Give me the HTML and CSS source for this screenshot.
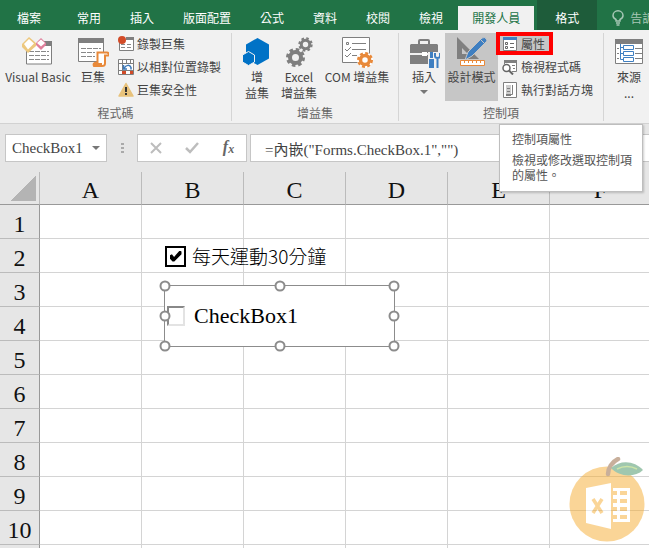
FILE: index.html
```
<!DOCTYPE html>
<html lang="zh-Hant">
<head>
    <meta charset="UTF-8">
    <meta name="viewport" content="width=device-width, initial-scale=1.0">
    <title>Excel</title>
    <link rel="stylesheet" href="styles.css">
</head>
<body>

    <nav class="tabs">
        <button class="file">檔案</button>
        <button>常用</button>
        <button>插入</button>
        <button>版面配置</button>
        <button>公式</button>
        <button>資料</button>
        <button>校閱</button>
        <button>檢視</button>
        <button class="active">開發人員</button>
        <button class="context">格式</button>
        <button class="tell">
            <svg width="12" height="16" viewBox="0 0 12 16" fill="none" stroke="#a6c7b5" stroke-width="1.5"><path d="M4 11V9.500C2 8.500 1 7 1 5.500a5 4.700 0 0 1 10 0C11 7 10 8.500 8 9.500V11zM4 13h4M4.500 15h3"/></svg>
            告訴我
        </button>
    </nav>

    <div class="ribbon">
        <section class="group">
            <div class="tools">
                <button class="big vb">
                    <svg width="32" height="32" viewBox="0 0 32 32">
                        <path d="M4.500 5v22h25V5" fill="#fff" stroke="#7f7f7f"/>
                        <path d="M22 4h8v5h-8z" fill="#7f7f7f"/>
                        <path d="M7 14.500h20M7 18.500h20M7 22.500h20" stroke="#888" stroke-dasharray="5 1"/>
                        <path d="M0 7l7-7 7 6v3l-8 7-6-6z" fill="#edc87e"/>
                        <path d="M2 7l5-5 5 4.500-6 6z" fill="#fff"/>
                        <path d="M14 6l5-5 5 5v2l-5 5-5-5z" fill="#e07f9b"/>
                        <path d="M15 6l4-3.500L23 6l-4 3.500z" fill="#fff"/>
                    </svg>
                    <span>Visual Basic</span>
                </button>
                <button class="big">
                    <svg width="32" height="32" viewBox="0 0 32 32">
                        <path d="M1.500 2v22.500h25V2z" fill="#fff" stroke="#7f7f7f"/>
                        <path d="M1 1h26v5H1z" fill="#7f7f7f"/>
                        <path d="M4 11.500h20M4 15.500h14M4 19.500h14" stroke="#888" stroke-dasharray="5 1"/>
                        <path d="M20.500 15.500h9.500c2 0 2 3 1 3h-3v8c0 2-1 2.500-3 2.500h-8c-1-2 0-3.500 3.500-3.500z" fill="#fff" stroke="#e8893a" stroke-width="2"/>
                        <path d="M17 26h8v3h-8z" fill="#e8893a"/>
                    </svg>
                    <span>巨集</span>
                </button>
                <div class="small-tools">
                    <button class="small">
                        <svg width="16" height="16" viewBox="0 0 16 16">
                            <path d="M1.500 3v11.500h14V2" fill="#fff" stroke="#7f7f7f"/>
                            <path d="M8 1h8v3H8z" fill="#7f7f7f"/>
                            <path d="M3 8.500h4m2 0h4M3 11.500h4m2 0h4" stroke="#888"/>
                            <circle cx="4" cy="4" r="4" fill="#d24b28"/>
                        </svg>
                        錄製巨集
                    </button>
                    <button class="small">
                        <svg width="16" height="16" viewBox="0 0 16 16">
                            <path d="M.5.5h15v15H.5zM.5 4.500h15M.5 11.500h15M4.500.5v15M8.500.5v4M12.500.5v15" fill="#fff" stroke="#7f7f7f"/>
                            <path d="M4 12h4v3H4zM12 12h3v3h-3z" fill="#d24b28"/>
                            <path d="M5 5h8v6H5z" fill="#fff"/>
                            <path d="M5.500 6v4H9M6 9.500c2-4 6-4 7-1v2" fill="none" stroke="#3c78b8" stroke-width="1.500"/>
                        </svg>
                        以相對位置錄製
                    </button>
                    <button class="small">
                        <svg width="16" height="16" viewBox="0 0 16 16">
                            <path d="M8 1.500L15 14H1z" fill="#e8c27b" stroke="#e8c27b" stroke-width="1.500" stroke-linejoin="round"/>
                            <path d="M7 5h2v5H7zM7 11h2v2H7z" fill="#333"/>
                        </svg>
                        巨集安全性
                    </button>
                </div>
            </div>
            <h2>程式碼</h2>
        </section>

        <section class="group">
            <div class="tools">
                <button class="big">
                    <svg width="32" height="32" viewBox="0 0 32 32" fill="#0072c6">
                        <path d="M16.500 1L28 7.500v14L16.500 28 5 21.500v-14z"/>
                        <path d="M7.500 14.500l6 3.500v7l-6 3.500L1.500 25v-7z" stroke="#f1f1f1"/>
                    </svg>
                    <span>增<br>益集</span>
                </button>
                <button class="big">
                    <svg width="32" height="32" viewBox="0 0 32 32" fill="none" stroke="#7f7f7f">
                        <circle cx="12.500" cy="20.500" r="5.500" stroke-width="4"/>
                        <circle cx="12.500" cy="20.500" r="8" stroke-width="3" stroke-dasharray="3.500 2.783"/>
                        <circle cx="22.500" cy="7.500" r="4.200" stroke-width="3"/>
                        <circle cx="22.500" cy="7.500" r="6" stroke-width="2.400" stroke-dasharray="2.500 2.212"/>
                    </svg>
                    <span>Excel<br>增益集</span>
                </button>
                <button class="big wide">
                    <svg width="32" height="32" viewBox="0 0 32 32" fill="none" stroke="#7f7f7f">
                        <path d="M1.500.5h27v25h-27z" fill="#fff"/>
                        <path d="M5.500 5.500h2v2h-2zM11 6.500h14M11 12.500h14M11 18.500h5M4 12l2 2 4-4M4 18l2 2 4-4"/>
                        <circle cx="24" cy="23" r="6.500" fill="#fff" stroke="#fff" stroke-width="3"/>
                        <circle cx="24" cy="23" r="4.500" stroke="#e8893a" stroke-width="3.500"/>
                        <circle cx="24" cy="23" r="6.800" stroke="#e8893a" stroke-width="2.400" stroke-dasharray="3 2.341"/>
                    </svg>
                    <span>COM 增益集</span>
                </button>
            </div>
            <h2>增益集</h2>
        </section>

        <section class="group">
            <div class="tools">
                <button class="big">
                    <svg width="32" height="32" viewBox="0 0 32 32">
                        <path d="M11 7V4q0-1 1-1h8q1 0 1 1v3" fill="none" stroke="#7f7f7f" stroke-width="2"/>
                        <path d="M3 7h26l1 1v8H2V8zM2 18h28v9H2z" fill="#7f7f7f"/>
                        <path d="M14 15h5v4h-5z" fill="#fff"/>
                        <path d="M20 15h12v13H20z" fill="#f1f1f1"/>
                        <path d="M22 15h3v6h-3zM21 22h5v9h-5z" fill="#3f7fc1"/>
                        <path d="M27 16v3q0 2 2.500 2t2.500-2v-3M29.500 21v10" fill="none" stroke="#3f7fc1" stroke-width="2"/>
                    </svg>
                    <span>插入</span>
                    <i class="arrow"></i>
                </button>
                <button class="big design">
                    <svg width="32" height="32" viewBox="0 0 32 32">
                        <path d="M1 0l22 22H1zM6 11v6h6z" fill="#7f7f7f" fill-rule="evenodd"/>
                        <path d="M9 23l3-8L26 1q3-2 5 2 0 1-1 2L16 19z" fill="#3f7fc1" stroke="#c6c6c6"/>
                        <path d="M25 3l4 4" stroke="#c6c6c6"/>
                        <path d="M4.500 23.500h24v5h-24z" fill="#fff" stroke="#e8893a"/>
                        <path d="M8.500 24v2m4-2v2m4-2v2m4-2v2m4-2v2" stroke="#e8893a"/>
                    </svg>
                    <span>設計模式</span>
                </button>
                <div class="small-tools">
                    <div class="marked">
                        <button class="small on" aria-describedby="tip">
                            <svg width="16" height="16" viewBox="0 0 16 16">
                                <path d="M1.500 1v13.500h13V1" fill="#fff" stroke="#7f7f7f"/>
                                <path d="M1 1h14v3H1z" fill="#3f7fc1"/>
                                <path d="M3.500 6.500h2v2h-2zM3.500 10.500h2v2h-2zM8 7.500h4m-4 4h4" fill="none" stroke="#666"/>
                            </svg>
                            屬性
                        </button>
                        <div class="tip" id="tip" role="tooltip">
                            <strong>控制項屬性</strong>
                            <p>檢視或修改選取控制項的屬性。</p>
                        </div>
                    </div>
                    <button class="small">
                        <svg width="16" height="16" viewBox="0 0 16 16" fill="none" stroke="#7f7f7f">
                            <path d="M2.500 5V2.500h12v10H10" fill="#fff"/>
                            <path d="M2 2.500h13" stroke-width="3"/>
                            <path d="M10 6.500h3m-2 3h2"/>
                            <circle cx="4.500" cy="9" r="3.500" fill="#fff" stroke="#666" stroke-width="1.500"/>
                            <path d="M7 11.500l4 4" stroke="#666" stroke-width="2"/>
                        </svg>
                        檢視程式碼
                    </button>
                    <button class="small">
                        <svg width="16" height="16" viewBox="0 0 16 16" fill="none" stroke="#7f7f7f">
                            <path d="M1.500.5h13v15h-13z" fill="#fff"/>
                            <path d="M4 3h5v9H4z" fill="#ccc" stroke="none"/>
                            <path d="M10.500 3v9.500H4M5 6.500h3m-3 3h3M4 13.500h5"/>
                        </svg>
                        執行對話方塊
                    </button>
                </div>
            </div>
            <h2>控制項</h2>
        </section>

        <section class="group">
            <div class="tools">
                <button class="big">
                    <svg width="32" height="32" viewBox="0 0 32 32" fill="none" stroke="#7f7f7f">
                        <path d="M2.500 3.500h27v23h-27z" fill="#fff"/>
                        <path d="M2 4.500h28" stroke-width="5"/>
                        <path d="M22 11.500h7M22 16.500h7M22 21.500h7M4 11.500h2m-2 5h2m-2 5h2"/>
                        <path d="M7.500 7v15.500H11M7.500 10.500H11M7.500 16.500H11" stroke="#3f7fc1"/>
                        <path d="M10.500 8.500h10v4h-10zM10.500 14.500h10v4h-10zM10.500 20.500h10v4h-10z" fill="#fff" stroke="#3f7fc1"/>
                    </svg>
                    <span>來源<br>...</span>
                </button>
            </div>
        </section>
    </div>

    <div class="formula-bar">
        <div class="name-box">
            <input type="text" value="CheckBox1" aria-label="名稱方塊">
            <button aria-label="展開名稱"><i class="arrow"></i></button>
        </div>
        <span class="dots"></span>
        <div class="fx">
            <button aria-label="取消"><svg width="12" height="12" viewBox="0 0 12 12" fill="none" stroke="#bdbdbd" stroke-width="2"><path d="M1 1l10 10M11 1L1 11"/></svg></button>
            <button aria-label="輸入"><svg width="14" height="12" viewBox="0 0 14 12" fill="none" stroke="#bdbdbd" stroke-width="2.500"><path d="M1 6l4 4 8-9"/></svg></button>
            <button class="fn" aria-label="插入函數">f<sub>x</sub></button>
        </div>
        <input class="formula" type="text" value='=內嵌("Forms.CheckBox.1","")' aria-label="資料編輯列">
    </div>

    <main class="sheet">
        <table>
            <thead>
                <tr><th class="corner"></th><th>A</th><th>B</th><th>C</th><th>D</th><th>E</th><th>F</th></tr>
            </thead>
            <tbody>
                <tr><th>1</th><td></td><td></td><td></td><td></td><td></td><td></td></tr>
                <tr><th>2</th><td></td><td></td><td></td><td></td><td></td><td></td></tr>
                <tr><th>3</th><td></td><td></td><td></td><td></td><td></td><td></td></tr>
                <tr><th>4</th><td></td><td></td><td></td><td></td><td></td><td></td></tr>
                <tr><th>5</th><td></td><td></td><td></td><td></td><td></td><td></td></tr>
                <tr><th>6</th><td></td><td></td><td></td><td></td><td></td><td></td></tr>
                <tr><th>7</th><td></td><td></td><td></td><td></td><td></td><td></td></tr>
                <tr><th>8</th><td></td><td></td><td></td><td></td><td></td><td></td></tr>
                <tr><th>9</th><td></td><td></td><td></td><td></td><td></td><td></td></tr>
                <tr><th>10</th><td></td><td></td><td></td><td></td><td></td><td></td></tr>
                <tr><th></th><td></td><td></td><td></td><td></td><td></td><td></td></tr>
            </tbody>
        </table>

        <label class="form-check">
            <input type="checkbox" checked>
            每天運動30分鐘
        </label>

        <div class="control">
            <label><input type="checkbox">CheckBox1</label>
            <i class="handle nw"></i><i class="handle n"></i><i class="handle ne"></i>
            <i class="handle w"></i><i class="handle e"></i>
            <i class="handle sw"></i><i class="handle s"></i><i class="handle se"></i>
        </div>

        <svg class="logo" width="78" height="86" viewBox="0 0 78 86">
            <circle cx="38" cy="47" r="37.500" fill="#f7ad31"/>
            <path d="M39 17c0-6 4-12 10-15" fill="none" stroke="#936139" stroke-width="4.500" stroke-linecap="round"/>
            <path d="M42 11C52 2 66 4 74 13 66 21 50 20 42 11z" fill="#419162"/>
            <path d="M48 12c8-4 14-3 20 0" fill="none" stroke="#9ccc54" stroke-width="1.500"/>
            <path d="M17 31l25-5v46l-25-6z" fill="#fff"/>
            <path d="M44 31h17v34H44z" fill="#fff"/>
            <path d="M44 34h4v4h-4zM44 42h4v4h-4zM44 50h4v4h-4zM44 58h4v4h-4zM51 34h7v4h-7zM51 42h7v4h-7zM51 50h7v4h-7zM51 58h7v4h-7z" fill="#f7ad31"/>
            <path d="M24 42l9 14M33 42l-9 14" stroke="#f7ad31" stroke-width="3.500"/>
        </svg>
    </main>

</body>
</html>
```
FILE: styles.css
```
* {
    box-sizing: border-box;
}

body {
    font-family: "Noto Sans CJK TC", sans-serif;
    font-size: 12px;
    color: #444;
    margin: 0;
    height: 100vh;
    overflow: hidden;
    display: flex;
    flex-direction: column;
    background-color: #fff;
}

button {
    font: inherit;
    color: inherit;
    background: none;
    border: none;
    padding: 0;
    white-space: nowrap;
}

input {
    margin: 0;
}

svg {
    display: block;
    flex-shrink: 0;
}

/* tabs */
.tabs {
    background-color: #217346;
    color: white;
    height: 30px;
    display: flex;
    align-items: flex-end;
    gap: 1px;
    flex-shrink: 0;
    overflow: hidden;
}

.tabs button {
    height: 24px;
    line-height: 20px;
    padding: 0 14px;
    flex-shrink: 0;
}

.tabs .file {
    padding: 0 21px 0 17px;
}

.tabs .active {
    background-color: #f1f1f1;
    color: #217346;
}

.tabs .context {
    background-color: #1e5c3a;
    height: 30px;
    padding: 6px 18px 0;
    margin-left: 2px;
}

.tabs .tell {
    display: flex;
    gap: 6px;
    align-items: center;
    color: #a6c7b5;
}

/* ribbon */
.ribbon {
    background-color: #f1f1f1;
    border-bottom: 1px solid #d2d2d2;
    display: flex;
    padding: 3px 0 2px;
    flex-shrink: 0;
}

.group {
    border-right: 1px solid #d5d5d5;
    padding: 0 4px;
    flex-shrink: 0;
}

.group h2 {
    font-size: 12px;
    font-weight: normal;
    color: #666;
    text-align: center;
    line-height: 16px;
    margin: 0;
}

.tools {
    display: flex;
    height: 72px;
    align-items: flex-start;
}

.big {
    width: 42px;
    height: 68px;
    padding-top: 4px;
    line-height: 16px;
    display: flex;
    flex-direction: column;
    align-items: center;
}

.vb {
    width: 68px;
}

.wide {
    width: 74px;
}

.design {
    width: 53px;
    background-color: #c6c6c6;
}

.arrow {
    border: 4px solid transparent;
    border-top-color: #777;
    border-bottom: none;
}

.big .arrow {
    margin-top: 5px;
}

.small-tools {
    display: flex;
    flex-direction: column;
    align-items: flex-start;
    gap: 1px;
    margin: 0 2px;
}

.small {
    height: 22px;
    line-height: 22px;
    padding: 0 4px 0 2px;
    display: flex;
    align-items: center;
    gap: 3px;
}

.small.on {
    background-color: #c6c6c6;
}

.marked {
    position: relative;
}

.marked::after {
    content: "";
    position: absolute;
    inset: -1px -4px 0;
    border: 4px solid #f00;
}

.tip {
    position: absolute;
    z-index: 2;
    top: 91px;
    left: -1px;
    width: 144px;
    padding: 6px 10px 9px 12px;
    background-color: #fff;
    border: 1px solid #bebebe;
    box-shadow: 1px 1px 2px rgba(0, 0, 0, 0.2);
    line-height: 15px;
    color: #555;
}

.tip strong {
    font-weight: normal;
}

.tip p {
    margin: 6px 0 0;
}

/* formula bar */
.formula-bar {
    background-color: #e6e6e6;
    display: flex;
    padding: 10px 0 10px 5px;
    flex-shrink: 0;
}

.name-box,
.fx,
.formula {
    height: 28px;
    background-color: #fff;
    border: 1px solid #c6c6c6;
}

.name-box {
    width: 102px;
    display: flex;
    align-items: center;
}

.name-box input,
.formula {
    font-family: "Liberation Serif", "Noto Sans CJK TC", serif;
    font-size: 15px;
    color: #444;
}

.name-box input {
    width: 80px;
    border: none;
    padding: 0 0 0 6px;
}

.name-box button {
    display: flex;
    justify-content: center;
    width: 20px;
}

.dots {
    width: 30px;
    border: solid transparent;
    border-width: 9px 13px 9px 14px;
    background: repeating-linear-gradient(#aaa 0 2px, transparent 2px 4px) padding-box;
}

.fx {
    width: 110px;
    display: flex;
    align-items: center;
    justify-content: space-around;
}

.fn {
    font: italic bold 16px/18px "Liberation Serif", serif;
    color: #666;
}

.fn sub {
    font-size: 12px;
    vertical-align: -1px;
}

.formula {
    flex: 1;
    min-width: 0;
    margin-left: 3px;
    padding: 0 14px;
    border-right: none;
}

/* sheet */
.sheet {
    position: relative;
    flex: 1;
    min-height: 0;
    overflow: hidden;
}

table {
    table-layout: fixed;
    width: 652px;
    border-spacing: 0;
}

th,
td {
    height: 34px;
    padding: 0;
    border: solid #d4d4d4;
    border-width: 0 1px 1px 0;
}

th {
    font: 24px/26px "Liberation Serif", serif;
    color: #111;
    background-color: #e6e6e6;
}

tbody th {
    padding-top: 5px;
    border-right-color: #999;
    border-bottom-color: #bbb;
}

thead th {
    height: 33px;
    padding-top: 4px;
    border-bottom-color: #999;
    border-right-color: #bbb;
}

.corner {
    width: 40px;
    background: linear-gradient(135deg, transparent 50%, #b4b4b4 50%) 11px 4px / 25px 25px no-repeat #e6e6e6;
}

.form-check {
    position: absolute;
    left: 165px;
    top: 70px;
    display: flex;
    align-items: center;
    gap: 6px;
    font-size: 19px;
    font-weight: 300;
    line-height: 28px;
    color: #000;
}

.form-check input {
    appearance: none;
    width: 21px;
    height: 21px;
    border: 2px solid #000;
    background-color: #fff;
    display: grid;
    place-items: center;
}

.form-check input:checked::before {
    content: "";
    width: 12px;
    height: 11px;
    background-color: #000;
    clip-path: polygon(0 45%, 20% 35%, 38% 58%, 85% 0, 100% 8%, 100% 35%, 40% 100%, 25% 100%, 0 70%);
}

.control {
    position: absolute;
    left: 164px;
    top: 113px;
    width: 231px;
    height: 62px;
    border: 1px solid #8c8c8c;
    background-color: #fff;
    display: flex;
    align-items: center;
}

.control label {
    display: flex;
    align-items: center;
    gap: 9px;
    padding-left: 2px;
    font: 22px/26px "Liberation Serif", serif;
    color: #000;
}

.control input {
    appearance: none;
    width: 18px;
    height: 20px;
    border: 2px solid;
    border-color: #888 #e3e3e3 #e3e3e3 #888;
}

.handle {
    position: absolute;
    width: 11px;
    height: 11px;
    border: 2px solid #8c8c8c;
    border-radius: 50%;
    background-color: #fff;
    transform: translate(-50%, -50%);
}

.nw, .n, .ne { top: 0; }
.w, .e { top: 50%; }
.sw, .s, .se { top: 100%; }
.nw, .w, .sw { left: 0; }
.n, .s { left: 50%; }
.ne, .e, .se { left: 100%; }

.logo {
    position: absolute;
    right: 2px;
    bottom: 5px;
    opacity: 0.5;
}
```
